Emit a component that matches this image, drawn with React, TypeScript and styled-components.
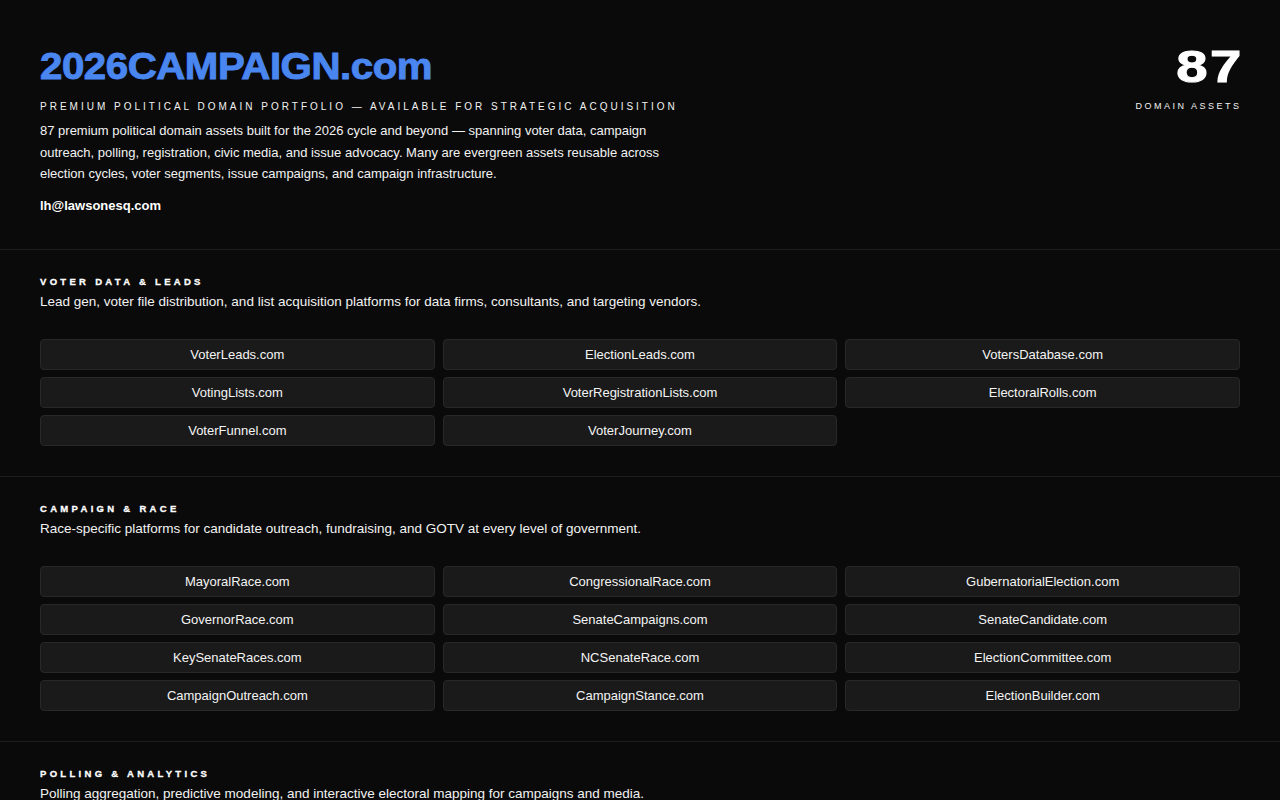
import React from "react";
import styled, { createGlobalStyle } from "styled-components";

const GlobalStyle = createGlobalStyle`
  html, body {
    margin: 0;
    padding: 0;
    background: #0a0a0a;
  }
  body {
    font-family: "Liberation Sans", Arial, sans-serif;
    color: #f2f2f2;
  }
  * { box-sizing: border-box; }
`;

const Page = styled.div`
  min-height: 100vh;
  background: #0a0a0a;
`;

const Header = styled.header`
  display: flex;
  justify-content: space-between;
  align-items: flex-start;
  padding: 45px 40px 33px;
  border-bottom: 1px solid #1e1e1e;
`;

const Brand = styled.div`
  display: flex;
  flex-direction: column;
  align-items: flex-start;
`;

/* Heavy, wide wordmark */
const Title = styled.h1`
  margin: 0;
  display: inline-block;
  font-size: 36px;
  line-height: 44px;
  font-weight: 700;
  letter-spacing: -0.4px;
  color: #4a86f0;
  -webkit-text-stroke: 0.9px #4a86f0;
  transform: scaleX(1.117);
  transform-origin: left center;
`;

const Tagline = styled.div`
  margin-top: 12px;
  font-size: 10px;
  line-height: 12px;
  letter-spacing: 3px;
  text-transform: uppercase;
  color: #f2f2f2;
`;

const Blurb = styled.p`
  margin: 7px 0 0;
  max-width: 640px;
  font-size: 13px;
  line-height: 21.5px;
  color: #f2f2f2;
`;

const Email = styled.a`
  margin-top: 11px;
  font-size: 13px;
  line-height: 20px;
  font-weight: 700;
  color: #ffffff;
  text-decoration: none;
`;

const Stat = styled.div`
  display: flex;
  flex-direction: column;
  align-items: flex-end;
`;

const StatNumber = styled.div`
  display: inline-block;
  font-size: 44px;
  line-height: 44px;
  font-weight: 700;
  color: #ffffff;
  letter-spacing: 2px;
  margin-right: -4px;
  -webkit-text-stroke: 1px #ffffff;
  transform: scaleX(1.28);
  transform-origin: right center;
`;

const StatLabel = styled.div`
  margin-top: 11px;
  font-size: 9px;
  line-height: 12px;
  letter-spacing: 2.5px;
  text-transform: uppercase;
  color: #f2f2f2;
  margin-right: -1.5px;
`;

const Section = styled.section`
  padding: 26px 40px 30px;
  border-bottom: 1px solid #1e1e1e;
`;

const SectionLabel = styled.h2`
  margin: 0;
  font-size: 9.5px;
  line-height: 12px;
  font-weight: 700;
  letter-spacing: 3.3px;
  text-transform: uppercase;
  color: #ffffff;
  -webkit-text-stroke: 0.3px #ffffff;
`;

const SectionBlurb = styled.p`
  margin: 4.5px 0 0;
  font-size: 13.5px;
  line-height: 20px;
  color: #f2f2f2;
`;

const Grid = styled.div`
  margin-top: 26.5px;
  display: grid;
  grid-template-columns: repeat(3, 1fr);
  gap: 7px 8px;
`;

const DomainCard = styled.div`
  height: 31px;
  display: flex;
  align-items: center;
  justify-content: center;
  background: #1a1a1a;
  border: 1px solid #282828;
  border-radius: 4px;
  font-size: 13px;
  color: #f4f4f4;
`;

type Category = {
  label: string;
  blurb: string;
  domains: string[];
};

const categories: Category[] = [
  {
    label: "Voter Data & Leads",
    blurb:
      "Lead gen, voter file distribution, and list acquisition platforms for data firms, consultants, and targeting vendors.",
    domains: [
      "VoterLeads.com",
      "ElectionLeads.com",
      "VotersDatabase.com",
      "VotingLists.com",
      "VoterRegistrationLists.com",
      "ElectoralRolls.com",
      "VoterFunnel.com",
      "VoterJourney.com",
    ],
  },
  {
    label: "Campaign & Race",
    blurb:
      "Race-specific platforms for candidate outreach, fundraising, and GOTV at every level of government.",
    domains: [
      "MayoralRace.com",
      "CongressionalRace.com",
      "GubernatorialElection.com",
      "GovernorRace.com",
      "SenateCampaigns.com",
      "SenateCandidate.com",
      "KeySenateRaces.com",
      "NCSenateRace.com",
      "ElectionCommittee.com",
      "CampaignOutreach.com",
      "CampaignStance.com",
      "ElectionBuilder.com",
    ],
  },
  {
    label: "Polling & Analytics",
    blurb:
      "Polling aggregation, predictive modeling, and interactive electoral mapping for campaigns and media.",
    domains: [
      "PollingAverages.com",
      "ElectionForecasts.com",
      "ElectoralMaps.com",
    ],
  },
];

export default function App() {
  return (
    <Page>
      <GlobalStyle />
      <Header>
        <Brand>
          <Title>2026CAMPAIGN.com</Title>
          <Tagline>
            Premium Political Domain Portfolio — Available for Strategic Acquisition
          </Tagline>
          <Blurb>
            87 premium political domain assets built for the 2026 cycle and beyond — spanning
            voter data, campaign outreach, polling, registration, civic media, and issue
            advocacy. Many are evergreen assets reusable across election cycles, voter
            segments, issue campaigns, and campaign infrastructure.
          </Blurb>
          <Email href="mailto:lh@lawsonesq.com">lh@lawsonesq.com</Email>
        </Brand>
        <Stat>
          <StatNumber>87</StatNumber>
          <StatLabel>Domain Assets</StatLabel>
        </Stat>
      </Header>
      {categories.map((cat) => (
        <Section key={cat.label}>
          <SectionLabel>{cat.label}</SectionLabel>
          <SectionBlurb>{cat.blurb}</SectionBlurb>
          <Grid>
            {cat.domains.map((d) => (
              <DomainCard key={d}>{d}</DomainCard>
            ))}
          </Grid>
        </Section>
      ))}
    </Page>
  );
}
